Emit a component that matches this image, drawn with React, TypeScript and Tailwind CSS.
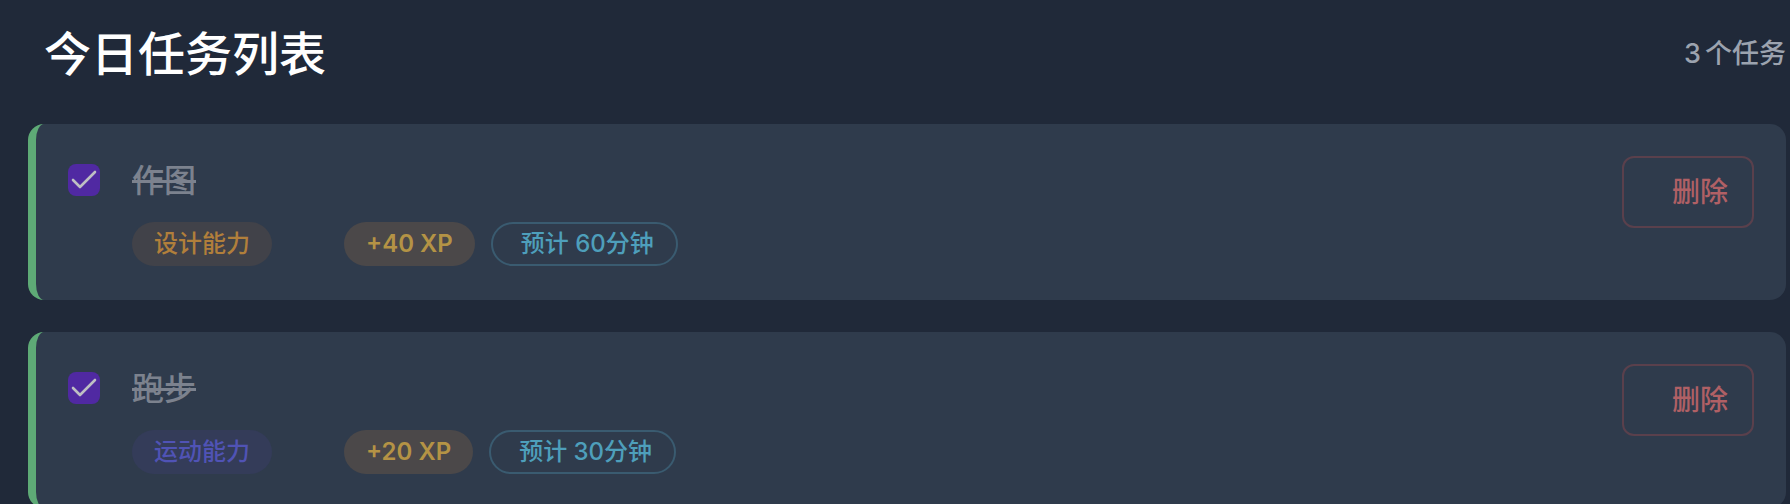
import { useState } from "react";

type Task = {
  id: number;
  title: string;
  skill: string;
  skillClass: string;
  xp: number;
  minutes: number;
};

const initialTasks: Task[] = [
  { id: 1, title: "作图", skill: "设计能力", skillClass: "bg-[#414249] text-[#b17f3b]", xp: 40, minutes: 60 },
  { id: 2, title: "跑步", skill: "运动能力", skillClass: "bg-[#343c59] text-[#5053b5]", xp: 20, minutes: 30 },
];

function TaskCard({ task }: { task: Task }) {
  const [done, setDone] = useState(true);
  const inputId = `task-${task.id}`;

  return (
    <li className="flex items-start rounded-2xl border-l-8 border-[#5eaa76] bg-[#2f3b4c] p-8">
      <span className="mt-2 grid size-8 shrink-0">
        <input
          id={inputId}
          type="checkbox"
          checked={done}
          onChange={() => setDone(!done)}
          className="col-start-1 row-start-1 size-8 appearance-none rounded-lg bg-[#414b5d] checked:bg-[#5029a2]"
        />
        {done && (
          <svg
            viewBox="0 0 32 32"
            className="pointer-events-none col-start-1 row-start-1 size-8"
            fill="none"
            stroke="#bebfc3"
            strokeWidth="2.6"
            strokeLinecap="round"
            strokeLinejoin="round"
            aria-hidden="true"
          >
            <path d="M5 16 12 23 27 8" />
          </svg>
        )}
      </span>
      <div className="ml-8 min-w-0 flex-1 pb-0.5">
        <label
          htmlFor={inputId}
          className={`block w-fit text-[32px] leading-[50px] font-medium text-[#7c828e] decoration-3 ${done ? "line-through" : ""}`}
        >
          {task.title}
        </label>
        <div className="mt-4 flex flex-wrap items-center text-[24px] leading-[44px] font-medium">
          <span className={`mr-[72px] rounded-full px-[22px] ${task.skillClass}`}>{task.skill}</span>
          <span className="mr-4 rounded-full bg-[#4b4849] px-[22px] font-semibold text-[#b49345]">+{task.xp} XP</span>
          <span className="rounded-full border-2 border-[#3a5b70] pr-[22px] pl-7 leading-[40px] text-[#4e9fbb]">
            预计 {task.minutes}分钟
          </span>
        </div>
      </div>
      <button
        type="button"
        className="h-[72px] shrink-0 rounded-xl border-2 border-[#5a404c] pr-6 pl-12 text-[28px] font-medium text-[#b06065]"
      >
        删除
      </button>
    </li>
  );
}

export default function App() {
  return (
    <main className="h-screen overflow-hidden bg-[#202939] pr-1 pl-7 font-['Inter','Noto_Sans_CJK_SC',sans-serif]">
      <header className="flex items-center justify-between pt-4 pb-8 pl-4">
        <h1 className="text-[47px] leading-[76px] font-medium text-white">今日任务列表</h1>
        <p className="flex gap-1 text-[27px] font-medium text-[#9ca3af]">
          <span>3</span>
          <span>个任务</span>
        </p>
      </header>
      <ul className="flex flex-col gap-8">
        {initialTasks.map((task) => (
          <TaskCard key={task.id} task={task} />
        ))}
      </ul>
    </main>
  );
}
